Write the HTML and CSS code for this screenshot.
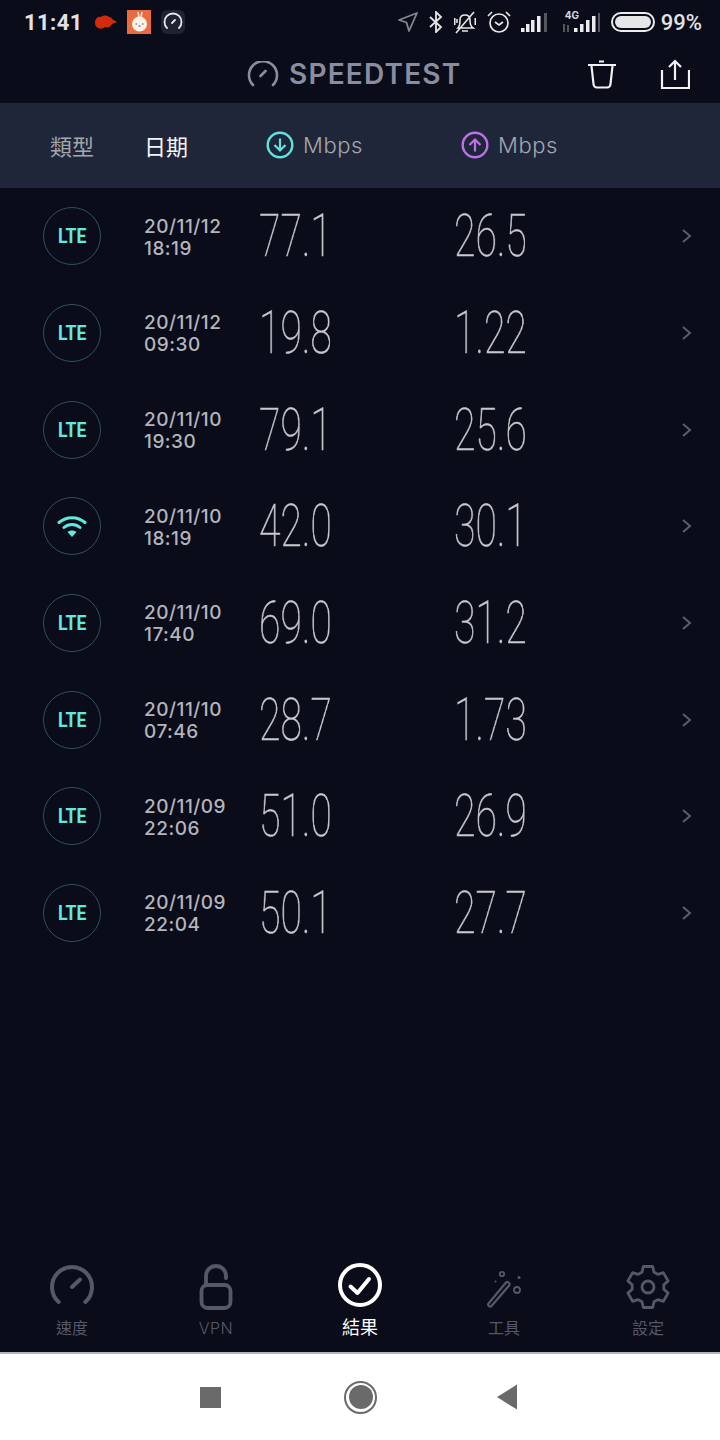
FILE: index.html
```html
<!DOCTYPE html>
<html lang="zh-Hant">

<head>
  <meta charset="UTF-8">
  <meta name="viewport" content="width=device-width, initial-scale=1">
  <title>Speedtest</title>
  <link rel="stylesheet" href="styles.css">
</head>

<body>
  <svg class="defs" width="0" height="0">
    <symbol id="chevron" viewBox="0 0 12 16">
      <path d="M2 2l7 6-7 6" fill="none" stroke="currentColor" stroke-width="2" />
    </symbol>
  </svg>

  <div class="statusbar">
    <div class="status-left">
      <span class="time">11:41</span>
      <svg class="st-red" width="24" height="16" viewBox="0 0 24 16">
        <path d="M1 9c0-4 3-7 6-6 2-2 6-2 8 0 2 0 3 1 3 2l5 3-5 2c-1 3-4 4-7 3-2 2-5 2-7 1-2-1-3-3-3-5z" fill="#d42a0c" />
      </svg>
      <svg class="st-rabbit" width="24" height="24" viewBox="0 0 24 24">
        <rect width="24" height="24" fill="#e96b3f" />
        <path d="M12 7l-1-5M14 7l1-5" stroke="#f8e8e0" stroke-width="1.5" />
        <circle cx="12.5" cy="14" r="7.5" fill="#fbf3ea" />
        <path d="M8.5 14h1.5M15 14h1.5M11.500 16h2" stroke="#55413a" stroke-width="1.2" />
      </svg>
      <svg class="st-gauge" width="24" height="24" viewBox="0 0 24 24">
        <rect width="24" height="24" rx="6" fill="#1e2233" />
        <path d="M6 18a8.500 8.500 0 1 1 12 0M11 13l3-3" fill="none" stroke="#e8e8ec" stroke-width="1.800" stroke-linecap="round" />
      </svg>
    </div>
    <div class="status-right">
      <svg class="si-loc" width="20" height="20" viewBox="0 0 20 20">
        <path d="M19 1L1 8l7.500 2.500L11 19z" fill="none" stroke="#85878f" stroke-width="1.800" stroke-linejoin="round" />
      </svg>
      <svg class="si-bt" width="14" height="22" viewBox="0 0 14 22">
        <path d="M1 6l11 10-5 5V1l5 5L1 16" fill="none" stroke="#e6e6e8" stroke-width="1.800" />
      </svg>
      <svg class="si-bell" width="22" height="24" viewBox="0 0 22 24">
        <path d="M4 18c2-2 2-5 2-8 0-3 2-5 5-5s5 2 5 5c0 3 0 6 3 8zM8 21h6M2 23L20 2M.7 8v7M3 9v4M21.300 8v7" fill="none" stroke="#e6e6e8" stroke-width="1.600" />
      </svg>
      <svg class="si-alarm" width="24" height="24" viewBox="0 0 24 24">
        <circle cx="12" cy="13" r="9" fill="none" stroke="#e6e6e8" stroke-width="1.700" />
        <path d="M8 12l4 3 4-3M1 6l4-4M23 6l-4-4" fill="none" stroke="#e6e6e8" stroke-width="1.700" />
      </svg>
      <svg class="si-signal" width="28" height="20" viewBox="0 0 28 20">
        <path d="M1 16h3.500v4H1zM6 12h3.500v8H6zM11 8h3.500v12H11zM17 4h3.500v16H17z" fill="#ececee" />
        <path d="M24 1h3v19h-3z" fill="#55575f" />
      </svg>
      <div class="sim">
        <span class="sim-label">4G</span>
        <svg width="38" height="20" viewBox="0 0 38 20">
          <path d="M2 12v8M6 13v7" stroke="#6d6f76" stroke-width="1.500" />
          <path d="M12 16h3.500v4H12zM18 12h3.500v8H18zM24 8h3.500v12H24zM30 4h3.500v16H30z" fill="#ececee" />
          <path d="M36 1h2v19h-2z" fill="#55575f" />
        </svg>
      </div>
      <div class="battery"><div class="battery-fill"></div></div>
      <span class="percent">99%</span>
    </div>
  </div>

  <div class="titlebar">
    <div class="brand">
      <svg width="32" height="26" viewBox="0 0 32 26">
        <path d="M6 24a14 14 0 1 1 20 0M13.500 15l5-5" fill="none" stroke="#8a8d9f" stroke-width="2.600" stroke-linecap="round" />
      </svg>
      <span class="brand-name">SPEEDTEST</span>
    </div>
    <svg class="trash" width="30" height="30" viewBox="0 0 30 30">
      <path d="M1 6h28M12 2.500h5M4.500 7l2 18c.2 2 1.500 3.500 3.500 3.500h10c2 0 3.300-1.500 3.500-3.500l2-18" fill="none" stroke="#f2f2f4" stroke-width="2.200" />
    </svg>
    <svg class="share" width="30" height="30" viewBox="0 0 30 30">
      <path d="M2 11v18h27V11M15 21V2M9 8l6-6 6 6" fill="none" stroke="#f2f2f4" stroke-width="2.200" />
    </svg>
  </div>

  <div class="table-head">
    <span class="th th-type">類型</span>
    <span class="th th-date">日期</span>
    <div class="th-speed th-down">
      <svg width="28" height="28" viewBox="0 0 28 28">
        <circle cx="14" cy="14" r="12.300" fill="none" stroke="#5fe3da" stroke-width="2.400" />
        <path d="M14 7.500v12M8.500 14l5.500 5.500 5.500-5.500" fill="none" stroke="#5fe3da" stroke-width="2.200" />
      </svg>
      <span>Mbps</span>
    </div>
    <div class="th-speed th-up">
      <svg width="28" height="28" viewBox="0 0 28 28">
        <circle cx="14" cy="14" r="12.300" fill="none" stroke="#bb72e4" stroke-width="2.400" />
        <path d="M14 20.500v-12M8.500 14L14 8.500l5.500 5.500" fill="none" stroke="#bb72e4" stroke-width="2.200" />
      </svg>
      <span>Mbps</span>
    </div>
  </div>

  <div class="list">
    <div class="row">
      <div class="conn"><span class="lte">LTE</span></div>
      <div class="date">20/11/12<br>18:19</div>
      <div class="num"><span>77.1</span></div>
      <div class="num"><span>26.5</span></div>
      <svg class="chev" width="12" height="16"><use href="#chevron" /></svg>
    </div>
    <div class="row">
      <div class="conn"><span class="lte">LTE</span></div>
      <div class="date">20/11/12<br>09:30</div>
      <div class="num"><span>19.8</span></div>
      <div class="num"><span>1.22</span></div>
      <svg class="chev" width="12" height="16"><use href="#chevron" /></svg>
    </div>
    <div class="row">
      <div class="conn"><span class="lte">LTE</span></div>
      <div class="date">20/11/10<br>19:30</div>
      <div class="num"><span>79.1</span></div>
      <div class="num"><span>25.6</span></div>
      <svg class="chev" width="12" height="16"><use href="#chevron" /></svg>
    </div>
    <div class="row">
      <div class="conn">
        <svg width="30" height="24" viewBox="0 0 30 24">
          <path d="M2 8.500c7.500-6.500 18.500-6.500 26 0M7 13.500c4.500-4 11.500-4 16 0" fill="none" stroke="#5fe9df" stroke-width="3" stroke-linecap="round" />
          <path d="M10.500 18c2.500-2 6.500-2 9 0L15 23z" fill="#5fe9df" />
        </svg>
      </div>
      <div class="date">20/11/10<br>18:19</div>
      <div class="num"><span>42.0</span></div>
      <div class="num"><span>30.1</span></div>
      <svg class="chev" width="12" height="16"><use href="#chevron" /></svg>
    </div>
    <div class="row">
      <div class="conn"><span class="lte">LTE</span></div>
      <div class="date">20/11/10<br>17:40</div>
      <div class="num"><span>69.0</span></div>
      <div class="num"><span>31.2</span></div>
      <svg class="chev" width="12" height="16"><use href="#chevron" /></svg>
    </div>
    <div class="row">
      <div class="conn"><span class="lte">LTE</span></div>
      <div class="date">20/11/10<br>07:46</div>
      <div class="num"><span>28.7</span></div>
      <div class="num"><span>1.73</span></div>
      <svg class="chev" width="12" height="16"><use href="#chevron" /></svg>
    </div>
    <div class="row">
      <div class="conn"><span class="lte">LTE</span></div>
      <div class="date">20/11/09<br>22:06</div>
      <div class="num"><span>51.0</span></div>
      <div class="num"><span>26.9</span></div>
      <svg class="chev" width="12" height="16"><use href="#chevron" /></svg>
    </div>
    <div class="row">
      <div class="conn"><span class="lte">LTE</span></div>
      <div class="date">20/11/09<br>22:04</div>
      <div class="num"><span>50.1</span></div>
      <div class="num"><span>27.7</span></div>
      <svg class="chev" width="12" height="16"><use href="#chevron" /></svg>
    </div>
  </div>

  <div class="tabs">
    <div class="tab">
      <svg width="48" height="48" viewBox="0 0 48 48">
        <path d="M10.700 39A20 20 0 1 1 37.300 39M24 24l8-7.500" fill="none" stroke="currentColor" stroke-width="4" stroke-linecap="round" />
      </svg>
      <span>速度</span>
    </div>
    <div class="tab">
      <svg width="48" height="48" viewBox="0 0 48 48">
        <rect x="9.500" y="22" width="29" height="23" rx="6" fill="none" stroke="currentColor" stroke-width="3.800" />
        <path d="M14 22V13a10 10 0 0 1 20 0v2" fill="none" stroke="currentColor" stroke-width="3.800" stroke-linecap="round" />
      </svg>
      <span class="tab-latin">VPN</span>
    </div>
    <div class="tab tab-active">
      <svg width="48" height="48" viewBox="0 0 48 48">
        <circle cx="24" cy="22" r="20" fill="none" stroke="currentColor" stroke-width="4" />
        <path d="M14.500 23.500l7 6.500L33 16" fill="none" stroke="currentColor" stroke-width="4" stroke-linecap="round" stroke-linejoin="round" />
      </svg>
      <span>結果</span>
    </div>
    <div class="tab">
      <svg width="48" height="48" viewBox="0 0 48 48">
        <path d="M8.500 40.500L26 19.500c1.300-1.500 4.500 1 3.300 2.800L11.500 43c-1.500 1.500-4.500-.8-3-2.500z" fill="none" stroke="currentColor" stroke-width="2.200" />
        <circle cx="22" cy="11" r="2.200" fill="none" stroke="currentColor" stroke-width="1.800" />
        <circle cx="37" cy="27" r="3" fill="none" stroke="currentColor" stroke-width="1.800" />
        <circle cx="39" cy="14.500" r="1.500" fill="currentColor" />
        <circle cx="15.500" cy="18.500" r="1" fill="currentColor" />
      </svg>
      <span>工具</span>
    </div>
    <div class="tab">
      <svg width="48" height="48" viewBox="0 0 48 48">
        <path d="M19.300 3.500h9.400l1.300 5.700 3.900 2.200 5.500-1.700 4.700 8.200-4.300 3.900v4.400l4.300 3.900-4.700 8.200-5.500-1.700-3.900 2.200-1.300 5.700h-9.400L18 38.800l-3.900-2.200-5.500 1.700-4.700-8.200 4.300-3.900v-4.400l-4.300-3.900 4.700-8.200 5.500 1.700L18 9.200z" fill="none" stroke="currentColor" stroke-width="2.800" stroke-linejoin="round" />
        <circle cx="24" cy="24" r="6" fill="none" stroke="currentColor" stroke-width="2.800" />
      </svg>
      <span>設定</span>
    </div>
  </div>

  <div class="navbar">
    <div class="nav-square"></div>
    <div class="nav-circle"><div class="nav-dot"></div></div>
    <svg class="nav-back" width="22" height="26" viewBox="0 0 22 26">
      <path d="M21 0.500v25L1 13z" fill="#6a6a6a" />
    </svg>
  </div>
</body>

</html>
```

FILE: styles.css
```css
:root {
  --bg: #0a0c1a;
  --band: #20263a;
  --muted: #555869;
  --text: #b4b5bb;
  --cyan: #5fe9df;
}

* {
  box-sizing: border-box;
}

body {
  margin: 0;
  width: 720px;
  height: 1440px;
  display: flex;
  flex-direction: column;
  background: var(--bg);
  font-family: Inter, "Noto Sans CJK TC", sans-serif;
  overflow: hidden;
}

.defs {
  display: block;
}

.statusbar {
  height: 44px;
  flex: none;
  display: flex;
  align-items: center;
  justify-content: space-between;
  padding: 0 18px 0 24px;
}

.status-left {
  display: flex;
  align-items: center;
}

.time {
  font-family: Roboto, sans-serif;
  font-size: 22px;
  font-weight: 700;
  letter-spacing: .4px;
  color: #e2e2e5;
  width: 70px;
}

.st-red {
  margin-right: 9px;
}

.st-rabbit {
  margin-right: 10px;
}

.status-right {
  display: flex;
  align-items: center;
}

.si-bt,
.si-bell {
  margin-left: 11px;
}

.si-alarm {
  margin-left: 11px;
}

.si-signal {
  margin-left: 9px;
}

.sim {
  position: relative;
  margin-left: 14px;
}

.sim-label {
  position: absolute;
  left: 3px;
  top: -2px;
  font-size: 10px;
  line-height: 10px;
  font-weight: 700;
  color: #d8d8dc;
}

.sim svg {
  display: block;
}

.battery {
  width: 44px;
  height: 20px;
  margin-left: 11px;
  padding: 2px;
  border: 2px solid #ececee;
  border-radius: 10px;
}

.battery-fill {
  height: 100%;
  background: #e6e6e8;
  border-radius: 6px;
}

.percent {
  font-family: Roboto, sans-serif;
  font-size: 22px;
  font-weight: 500;
  color: #e2e2e5;
  margin-left: 6px;
}

.titlebar {
  height: 59px;
  flex: none;
  display: flex;
  align-items: center;
  padding-left: 247px;
}

.brand {
  display: flex;
  align-items: center;
  gap: 10px;
  width: 340px;
}

.brand-name {
  font-size: 28px;
  font-weight: 600;
  letter-spacing: 1.200px;
  color: #8a8d9f;
}

.share {
  margin-left: 43px;
}

.table-head {
  height: 85px;
  flex: none;
  display: flex;
  align-items: center;
  padding-bottom: 1px;
  background: var(--band);
  color: #a4a6ae;
}

.th {
  font-size: 22px;
}

.th-type {
  margin-left: 50px;
  width: 95px;
}

.th-date {
  width: 122px;
  margin-left: -1px;
  color: #f4f4f6;
}

.th-speed {
  display: flex;
  align-items: center;
  gap: 9px;
  font-size: 22px;
  font-weight: 300;
  letter-spacing: .6px;
}

.th-down {
  width: 195px;
}

.list {
  flex: 1;
}

.row {
  height: 96.7px;
  display: grid;
  grid-template-columns: 58px 159px 195px 226px 12px;
  align-items: center;
  padding-left: 43px;
}

.conn {
  width: 58px;
  height: 58px;
  border: 1.5px solid #2f525c;
  border-radius: 50%;
  display: flex;
  align-items: center;
  justify-content: center;
}

.date {
  margin: 2.500px 0 0 43px;
  font-size: 19px;
  line-height: 22px;
  font-weight: 500;
  letter-spacing: .5px;
  color: var(--text);
  white-space: nowrap;
}

.lte {
  display: inline-block;
  font-family: Roboto, sans-serif;
  font-size: 20px;
  font-weight: 700;
  color: var(--cyan);
  transform: scaleX(.88);
}

.num {
  font-family: Roboto, sans-serif;
  font-size: 59px;
  font-weight: 100;
  line-height: 60px;
  margin-left: -1px;
  color: #c8c9ce;
  -webkit-text-stroke: .5px #c8c9ce;
  white-space: nowrap;
}

.num span {
  display: inline-block;
  transform: scaleX(.665);
  transform-origin: left center;
  will-change: transform;
}

.chev {
  color: #5a5d6c;
}

.tabs {
  height: 104px;
  flex: none;
  display: grid;
  grid-template-columns: repeat(5, 144px);
  border-bottom: 2px solid #b5b5b8;
  color: var(--muted);
}

.tab {
  display: flex;
  flex-direction: column;
  align-items: center;
  padding-top: 13px;
  font-size: 16px;
  line-height: 22px;
}

.tab svg {
  margin-bottom: 6px;
}

.tab-latin {
  font-size: 16px;
  font-weight: 300;
  letter-spacing: .5px;
}

.tab-active {
  color: #fff;
  font-size: 18px;
}

.navbar {
  height: 86px;
  flex: none;
  background: #fff;
  display: flex;
  align-items: center;
  padding-left: 200px;
}

.nav-square {
  width: 21px;
  height: 21px;
  background: #6a6a6a;
}

.nav-circle {
  width: 33px;
  height: 33px;
  margin-left: 123px;
  border: 2.500px solid #6a6a6a;
  border-radius: 50%;
  padding: 2.500px;
}

.nav-dot {
  width: 100%;
  height: 100%;
  background: #6a6a6a;
  border-radius: 50%;
}

.nav-back {
  margin-left: 119px;
}
```
